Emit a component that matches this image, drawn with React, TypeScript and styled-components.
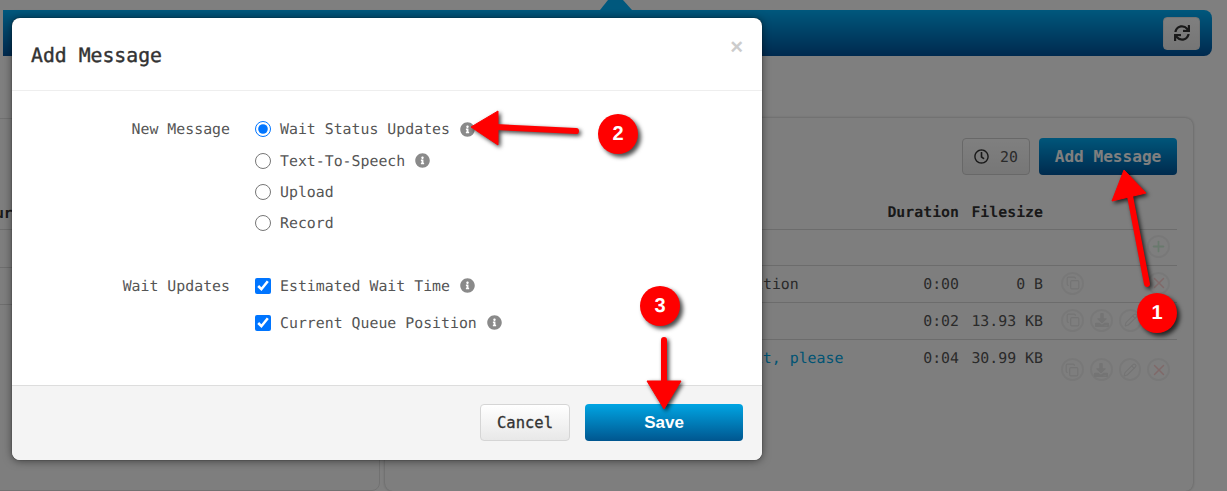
import * as React from 'react';
import styled, { createGlobalStyle } from 'styled-components';
import { FaDownload, FaInfoCircle, FaRegClock, FaSync } from 'react-icons/fa';
import { Copy, Pencil, Plus, X } from 'lucide-react';

const MONO = `"DejaVu Sans Mono", "Liberation Mono", monospace`;

const GlobalStyle = createGlobalStyle`
  html, body {
    margin: 0;
    padding: 0;
    background: #fff;
  }
  body {
    font-family: ${MONO};
    font-size: 14.87px;
    text-rendering: geometricPrecision;
  }
`;

const Page = styled.div`
  position: relative;
  width: 1227px;
  height: 491px;
  overflow: hidden;
  background: #fff;
`;

const Header = styled.header`
  position: relative;
  display: flex;
  justify-content: flex-end;
  align-items: center;
  box-sizing: border-box;
  width: 1209px;
  height: 46px;
  margin: 10px 0 0 3px;
  padding-right: 12px;
  border-radius: 0 8px 8px 0;
  background: linear-gradient(#00b0fa, #00549e);
`;

const Notch = styled.div`
  position: absolute;
  left: 597px;
  top: -10px;
  width: 32px;
  height: 10px;
  background: #00b0fa;
  clip-path: polygon(8px 0, 23px 0, 100% 100%, 0 100%);
`;

const RefreshButton = styled.button`
  display: flex;
  align-items: center;
  justify-content: center;
  width: 37px;
  height: 33px;
  padding: 0;
  border: 1px solid #e8e8e8;
  border-radius: 4px;
  background: linear-gradient(#fff, #ececec);
  color: #333;
  font-size: 16px;
`;

const Content = styled.main`
  display: flex;
  gap: 5px;
  margin-top: 62px;
  height: 373px;
`;

const LeftPanel = styled.section`
  box-sizing: border-box;
  width: 416px;
  margin-left: -36px;
  padding: 85px 0 0 12px;
  border: 1px solid #e2e2e2;
  border-radius: 8px;
  background: #fdfdfd;
`;

const LeftHead = styled.div`
  height: 25px;
  line-height: 18px;
  font-weight: bold;
  color: #333;
`;

const LeftRow = styled.div<{ $height: number }>`
  height: ${p => p.$height}px;
  box-sizing: border-box;
  border-top: 1px solid #dcdcdc;
`;

const RightPanel = styled.section`
  box-sizing: border-box;
  width: 808px;
  padding: 20px 16px 0;
  border-radius: 8px;
  background: #fdfdfd;
  box-shadow: 0 0 3px rgba(0, 0, 0, 0.3);
`;

const Toolbar = styled.div`
  display: flex;
  justify-content: flex-end;
  gap: 9px;
  height: 37px;
`;

const WaitBox = styled.div`
  display: flex;
  align-items: center;
  gap: 11px;
  box-sizing: border-box;
  width: 68px;
  padding-left: 11px;
  border: 1px solid #d0d0d0;
  border-radius: 4px;
  background: linear-gradient(#fff, #eee);
  color: #555;
  font-size: 14.87px;
  svg {
    color: #333;
    font-size: 15px;
  }
`;

const AddButton = styled.button`
  width: 138px;
  padding: 0;
  border: 0;
  border-radius: 4px;
  background: linear-gradient(#00acf5, #00569c);
  color: #fff;
  font-family: ${MONO};
  font-size: 16.1px;
  font-weight: bold;
`;

const TableRow = styled.div<{ $height: number }>`
  display: grid;
  grid-template-columns: 1fr 72px 84px 134px;
  align-items: center;
  box-sizing: border-box;
  height: ${p => p.$height}px;
  border-bottom: 1px solid #d8d8d8;
  color: #555;
  &:last-child {
    border-bottom: 0;
    align-items: start;
    line-height: 37px;
  }
`;

const HeadRow = styled(TableRow)`
  align-items: end;
  padding-bottom: 8px;
  color: #333;
  font-weight: bold;
`;

const MessageText = styled.div<{ $link?: boolean; $indent: number }>`
  padding-left: ${p => p.$indent}px;
  white-space: nowrap;
  color: ${p => (p.$link ? '#00a8e8' : '#555')};
`;

const Num = styled.div`
  text-align: right;
  white-space: pre;
`;

const Actions = styled.div<{ $low?: boolean }>`
  display: flex;
  gap: 6px;
  padding: ${p => (p.$low ? '18px' : '0')} 7px ${p => (p.$low ? '0' : '2px')} 18px;
`;

const IconCircle = styled.span<{ $tone?: string; $push?: boolean }>`
  display: flex;
  align-items: center;
  justify-content: center;
  box-sizing: border-box;
  width: 23px;
  height: 23px;
  margin-left: ${p => (p.$push ? 'auto' : '0')};
  border: 2px solid #f1f1f1;
  border-radius: 50%;
  color: ${p => p.$tone || '#e8e8e8'};
  font-size: 14px;
`;

const Backdrop = styled.div`
  position: absolute;
  inset: 0;
  background: rgba(0, 0, 0, 0.5);
`;

const Modal = styled.div`
  position: absolute;
  left: 12px;
  top: 18px;
  display: flex;
  flex-direction: column;
  width: 750px;
  height: 442px;
  overflow: hidden;
  border-radius: 8px;
  background: #fff;
  box-shadow: 0 0 1px rgba(0, 0, 0, 0.9), 0 1px 8px rgba(0, 0, 0, 0.5);
`;

const ModalHeader = styled.div`
  display: flex;
  align-items: flex-start;
  justify-content: space-between;
  box-sizing: border-box;
  height: 73px;
  padding: 24px 19px 0;
  border-bottom: 1px solid #eee;
`;

const Title = styled.h2`
  margin: 0;
  color: #333;
  font-size: 19.8px;
  font-weight: normal;
  line-height: 28px;
  -webkit-text-stroke: 0.4px #333;
`;

const Close = styled.span`
  margin: -8px 0 0;
  color: #ccc;
  font-family: "Liberation Sans", sans-serif;
  font-size: 22px;
  font-weight: bold;
  line-height: 26px;
`;

const ModalBody = styled.div`
  flex: 1;
  padding-top: 22px;
`;

const FormRow = styled.div<{ $gapBelow?: number }>`
  display: grid;
  grid-template-columns: 218px 1fr;
  column-gap: 25px;
  margin-bottom: ${p => p.$gapBelow || 0}px;
`;

const FieldLabel = styled.div<{ $height: number }>`
  color: #555;
  line-height: ${p => p.$height}px;
  text-align: right;
`;

const Choice = styled.label<{ $height: number }>`
  display: flex;
  align-items: center;
  gap: 9px;
  height: ${p => p.$height}px;
  color: #555;
  input {
    width: 16px;
    height: 16px;
    margin: 0;
  }
  svg {
    margin-left: 1px;
    color: #8a8a8a;
    font-size: 15px;
  }
`;

const ModalFooter = styled.div`
  display: flex;
  align-items: center;
  justify-content: flex-end;
  gap: 15px;
  box-sizing: border-box;
  height: 75px;
  padding: 0 19px 1px 0;
  border-top: 1px solid #ddd;
  background: #f4f4f4;
`;

const CancelButton = styled.button`
  box-sizing: border-box;
  width: 90px;
  height: 37px;
  padding: 0;
  border: 1px solid #d5d5d5;
  border-radius: 4px;
  background: linear-gradient(#fff, #e8e8e8);
  color: #333;
  font-family: ${MONO};
  font-size: 15.5px;
  -webkit-text-stroke: 0.3px #333;
`;

const SaveButton = styled.button`
  width: 158px;
  height: 37px;
  padding: 0;
  border: 0;
  border-radius: 4px;
  background: linear-gradient(#00a5e3, #00568f);
  color: #fff;
  font-family: "Liberation Sans", sans-serif;
  font-size: 17px;
  font-weight: bold;
`;

const ArrowLayer = styled.svg`
  position: absolute;
  inset: 0;
  width: 1227px;
  height: 491px;
  pointer-events: none;
  filter: drop-shadow(2px 2px 2px rgba(0, 0, 0, 0.75));
`;

const Badge = styled.div<{ $left: number; $top: number }>`
  position: absolute;
  left: ${p => p.$left}px;
  top: ${p => p.$top}px;
  display: flex;
  align-items: center;
  justify-content: center;
  width: 40px;
  height: 40px;
  border-radius: 50%;
  background: #ff0000;
  box-shadow: 3px 3px 4px rgba(0, 0, 0, 0.7);
  color: #fff;
  font-family: "Liberation Sans", sans-serif;
  font-size: 20px;
  font-weight: bold;
`;

const ARROWS = [
  { shaft: 'M1147 284 L1130 196', head: '1124,170 1112,201 1146,193' },
  { shaft: 'M576 131 L496 127', head: '471,127 498,111 498,145' },
  { shaft: 'M664 340 L664 382', head: '664,409 647,381 681,381' },
];

const RED_TONE = '#ffd2d2';
const GREEN_TONE = '#d2f2da';

export default function App() {
  return (
    <Page>
      <GlobalStyle />
      <Header>
        <Notch />
        <RefreshButton><FaSync /></RefreshButton>
      </Header>
      <Content>
        <LeftPanel>
          <LeftHead>Hour</LeftHead>
          <LeftRow $height={38} />
          <LeftRow $height={37} />
          <LeftRow $height={37} />
        </LeftPanel>
        <RightPanel>
          <Toolbar>
            <WaitBox><FaRegClock />20</WaitBox>
            <AddButton>Add Message</AddButton>
          </Toolbar>
          <HeadRow $height={55}>
            <div />
            <Num>Duration</Num>
            <Num>Filesize</Num>
            <div />
          </HeadRow>
          <TableRow $height={36}>
            <div />
            <div />
            <div />
            <Actions>
              <IconCircle $push $tone={GREEN_TONE}><Plus size={17} strokeWidth={2.5} /></IconCircle>
            </Actions>
          </TableRow>
          <TableRow $height={37}>
            <MessageText $indent={192}>Announce queue position</MessageText>
            <Num>0:00</Num>
            <Num>0 B</Num>
            <Actions>
              <IconCircle><Copy size={14} strokeWidth={2} /></IconCircle>
              <IconCircle $push $tone={RED_TONE}><X size={18} strokeWidth={2} /></IconCircle>
            </Actions>
          </TableRow>
          <TableRow $height={37}>
            <div />
            <Num>0:02</Num>
            <Num>13.93 KB</Num>
            <Actions>
              <IconCircle><Copy size={14} strokeWidth={2} /></IconCircle>
              <IconCircle><FaDownload /></IconCircle>
              <IconCircle><Pencil size={14} strokeWidth={2} /></IconCircle>
            </Actions>
          </TableRow>
          <TableRow $height={60}>
            <MessageText $link $indent={4}>All agents are busy, so hold on, and wait, please</MessageText>
            <Num>0:04</Num>
            <Num>30.99 KB</Num>
            <Actions $low>
              <IconCircle><Copy size={14} strokeWidth={2} /></IconCircle>
              <IconCircle><FaDownload /></IconCircle>
              <IconCircle><Pencil size={14} strokeWidth={2} /></IconCircle>
              <IconCircle $tone={RED_TONE}><X size={18} strokeWidth={2} /></IconCircle>
            </Actions>
          </TableRow>
        </RightPanel>
      </Content>
      <Backdrop />
      <Modal>
        <ModalHeader>
          <Title>Add Message</Title>
          <Close>×</Close>
        </ModalHeader>
        <ModalBody>
          <FormRow $gapBelow={29}>
            <FieldLabel $height={33}>New Message</FieldLabel>
            <div>
              <Choice $height={32}>
                <input type="radio" name="kind" defaultChecked />
                Wait Status Updates <FaInfoCircle />
              </Choice>
              <Choice $height={31}>
                <input type="radio" name="kind" />
                Text-To-Speech <FaInfoCircle />
              </Choice>
              <Choice $height={31}>
                <input type="radio" name="kind" />
                Upload
              </Choice>
              <Choice $height={31}>
                <input type="radio" name="kind" />
                Record
              </Choice>
            </div>
          </FormRow>
          <FormRow>
            <FieldLabel $height={39}>Wait Updates</FieldLabel>
            <div>
              <Choice $height={37}>
                <input type="checkbox" defaultChecked />
                Estimated Wait Time <FaInfoCircle />
              </Choice>
              <Choice $height={37}>
                <input type="checkbox" defaultChecked />
                Current Queue Position <FaInfoCircle />
              </Choice>
            </div>
          </FormRow>
        </ModalBody>
        <ModalFooter>
          <CancelButton>Cancel</CancelButton>
          <SaveButton>Save</SaveButton>
        </ModalFooter>
      </Modal>
      <ArrowLayer viewBox="0 0 1227 491">
        {ARROWS.map(a => (
          <g key={a.head} fill="#ff0000" stroke="#ff0000">
            <path d={a.shaft} strokeWidth={6} strokeLinecap="round" fill="none" />
            <polygon points={a.head} strokeWidth={1} strokeLinejoin="round" />
          </g>
        ))}
      </ArrowLayer>
      <Badge $left={1137} $top={293}>1</Badge>
      <Badge $left={598} $top={114}>2</Badge>
      <Badge $left={640} $top={286}>3</Badge>
    </Page>
  );
}
